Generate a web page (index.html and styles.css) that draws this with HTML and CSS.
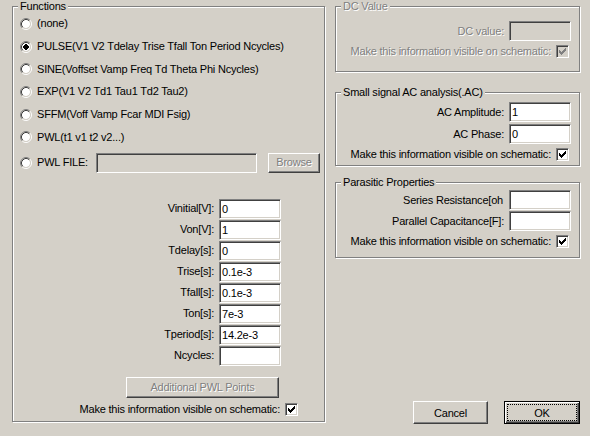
FILE: index.html
```html
<!DOCTYPE html>
<html>
<head>
<meta charset="utf-8">
<title>Independent Voltage Source</title>
<link rel="stylesheet" href="styles.css">
</head>
<body>
<div class="dialog">
  <div class="group functions">
    <span class="group-title">Functions</span>
    <div class="radios">
      <div class="radio-row">
        <svg class="radio" width="12" height="12" viewBox="0 0 12 12"><path d="M2.11 9.89A5.5 5.5 0 0 1 9.89 2.11" fill="none" stroke="#808080"/><path d="M9.89 2.11A5.5 5.5 0 0 1 2.11 9.89" fill="none" stroke="#fff"/><circle cx="6" cy="6" r="4" fill="#fff"/><path d="M2.82 9.18A4.5 4.5 0 0 1 9.18 2.82" fill="none" stroke="#404040"/><path d="M9.18 2.82A4.5 4.5 0 0 1 2.82 9.18" fill="none" stroke="#d4d0c8"/></svg>
        <span>(none)</span>
      </div>
      <div class="radio-row">
        <svg class="radio" width="12" height="12" viewBox="0 0 12 12"><path d="M2.11 9.89A5.5 5.5 0 0 1 9.89 2.11" fill="none" stroke="#808080"/><path d="M9.89 2.11A5.5 5.5 0 0 1 2.11 9.89" fill="none" stroke="#fff"/><circle cx="6" cy="6" r="4" fill="#fff"/><path d="M2.82 9.18A4.5 4.5 0 0 1 9.18 2.82" fill="none" stroke="#404040"/><path d="M9.18 2.82A4.5 4.5 0 0 1 2.82 9.18" fill="none" stroke="#d4d0c8"/><rect x="4" y="4" width="4" height="4" fill="#000"/><rect x="5" y="3" width="2" height="6" fill="#000"/><rect x="3" y="5" width="6" height="2" fill="#000"/></svg>
        <span>PULSE(V1 V2 Tdelay Trise Tfall Ton Period Ncycles)</span>
      </div>
      <div class="radio-row">
        <svg class="radio" width="12" height="12" viewBox="0 0 12 12"><path d="M2.11 9.89A5.5 5.5 0 0 1 9.89 2.11" fill="none" stroke="#808080"/><path d="M9.89 2.11A5.5 5.5 0 0 1 2.11 9.89" fill="none" stroke="#fff"/><circle cx="6" cy="6" r="4" fill="#fff"/><path d="M2.82 9.18A4.5 4.5 0 0 1 9.18 2.82" fill="none" stroke="#404040"/><path d="M9.18 2.82A4.5 4.5 0 0 1 2.82 9.18" fill="none" stroke="#d4d0c8"/></svg>
        <span>SINE(Voffset Vamp Freq Td Theta Phi Ncycles)</span>
      </div>
      <div class="radio-row">
        <svg class="radio" width="12" height="12" viewBox="0 0 12 12"><path d="M2.11 9.89A5.5 5.5 0 0 1 9.89 2.11" fill="none" stroke="#808080"/><path d="M9.89 2.11A5.5 5.5 0 0 1 2.11 9.89" fill="none" stroke="#fff"/><circle cx="6" cy="6" r="4" fill="#fff"/><path d="M2.82 9.18A4.5 4.5 0 0 1 9.18 2.82" fill="none" stroke="#404040"/><path d="M9.18 2.82A4.5 4.5 0 0 1 2.82 9.18" fill="none" stroke="#d4d0c8"/></svg>
        <span>EXP(V1 V2 Td1 Tau1 Td2 Tau2)</span>
      </div>
      <div class="radio-row">
        <svg class="radio" width="12" height="12" viewBox="0 0 12 12"><path d="M2.11 9.89A5.5 5.5 0 0 1 9.89 2.11" fill="none" stroke="#808080"/><path d="M9.89 2.11A5.5 5.5 0 0 1 2.11 9.89" fill="none" stroke="#fff"/><circle cx="6" cy="6" r="4" fill="#fff"/><path d="M2.82 9.18A4.5 4.5 0 0 1 9.18 2.82" fill="none" stroke="#404040"/><path d="M9.18 2.82A4.5 4.5 0 0 1 2.82 9.18" fill="none" stroke="#d4d0c8"/></svg>
        <span>SFFM(Voff Vamp Fcar MDI Fsig)</span>
      </div>
      <div class="radio-row">
        <svg class="radio" width="12" height="12" viewBox="0 0 12 12"><path d="M2.11 9.89A5.5 5.5 0 0 1 9.89 2.11" fill="none" stroke="#808080"/><path d="M9.89 2.11A5.5 5.5 0 0 1 2.11 9.89" fill="none" stroke="#fff"/><circle cx="6" cy="6" r="4" fill="#fff"/><path d="M2.82 9.18A4.5 4.5 0 0 1 9.18 2.82" fill="none" stroke="#404040"/><path d="M9.18 2.82A4.5 4.5 0 0 1 2.82 9.18" fill="none" stroke="#d4d0c8"/></svg>
        <span>PWL(t1 v1 t2 v2...)</span>
      </div>
    </div>
    <div class="pwl-file">
      <svg class="radio" width="12" height="12" viewBox="0 0 12 12"><path d="M2.11 9.89A5.5 5.5 0 0 1 9.89 2.11" fill="none" stroke="#808080"/><path d="M9.89 2.11A5.5 5.5 0 0 1 2.11 9.89" fill="none" stroke="#fff"/><circle cx="6" cy="6" r="4" fill="#fff"/><path d="M2.82 9.18A4.5 4.5 0 0 1 9.18 2.82" fill="none" stroke="#404040"/><path d="M9.18 2.82A4.5 4.5 0 0 1 2.82 9.18" fill="none" stroke="#d4d0c8"/></svg>
      <span class="pwl-label">PWL FILE:</span>
      <span class="edit off pwl-edit"></span>
      <button class="btn disabled browse">Browse</button>
    </div>
    <div class="fields">
      <div class="field"><span>Vinitial[V]:</span><span class="edit">0</span></div>
      <div class="field"><span>Von[V]:</span><span class="edit">1</span></div>
      <div class="field"><span>Tdelay[s]:</span><span class="edit">0</span></div>
      <div class="field"><span>Trise[s]:</span><span class="edit">0.1e-3</span></div>
      <div class="field"><span>Tfall[s]:</span><span class="edit">0.1e-3</span></div>
      <div class="field"><span>Ton[s]:</span><span class="edit">7e-3</span></div>
      <div class="field"><span>Tperiod[s]:</span><span class="edit">14.2e-3</span></div>
      <div class="field"><span>Ncycles:</span><span class="edit"></span></div>
    </div>
    <button class="btn disabled pwl-btn">Additional PWL Points</button>
    <div class="check-row left-check">
      <span>Make this information visible on schematic:</span>
      <span class="check"><svg width="11" height="11" viewBox="0 0 11 11"><path d="M2 4h1v1h1v1h1v-1h1v-1h1v-1h1v-1h1v3h-1v1h-1v1h-1v1h-1v1h-1v-1h-1v-1h-1z" fill="#000"/></svg></span>
    </div>
  </div>

  <div class="right">
    <div class="group dc disabled">
      <span class="group-title">DC Value</span>
      <div class="row dc-row"><span>DC value:</span><span class="edit off"></span></div>
      <div class="check-row r-check dc-check">
        <span>Make this information visible on schematic:</span>
        <span class="check off"><svg width="11" height="11" viewBox="0 0 11 11"><path d="M2 4h1v1h1v1h1v-1h1v-1h1v-1h1v-1h1v3h-1v1h-1v1h-1v1h-1v1h-1v-1h-1v-1h-1z" fill="#808080"/></svg></span>
      </div>
    </div>

    <div class="group ac">
      <span class="group-title">Small signal AC analysis(.AC)</span>
      <div class="row ac-amp"><span>AC Amplitude:</span><span class="edit">1</span></div>
      <div class="row ac-phase"><span>AC Phase:</span><span class="edit">0</span></div>
      <div class="check-row r-check ac-check">
        <span>Make this information visible on schematic:</span>
        <span class="check"><svg width="11" height="11" viewBox="0 0 11 11"><path d="M2 4h1v1h1v1h1v-1h1v-1h1v-1h1v-1h1v3h-1v1h-1v1h-1v1h-1v1h-1v-1h-1v-1h-1z" fill="#000"/></svg></span>
      </div>
    </div>

    <div class="group para">
      <span class="group-title">Parasitic Properties</span>
      <div class="row ser"><span class="ser-label">Series Resistance[oh</span><span class="edit"></span></div>
      <div class="row par"><span>Parallel Capacitance[F]:</span><span class="edit"></span></div>
      <div class="check-row r-check para-check">
        <span>Make this information visible on schematic:</span>
        <span class="check"><svg width="11" height="11" viewBox="0 0 11 11"><path d="M2 4h1v1h1v1h1v-1h1v-1h1v-1h1v-1h1v3h-1v1h-1v1h-1v1h-1v1h-1v-1h-1v-1h-1z" fill="#000"/></svg></span>
      </div>
    </div>

    <div class="buttons">
      <button class="btn cancel">Cancel</button>
      <button class="btn default ok">OK</button>
    </div>
  </div>
</div>
</body>
</html>
```

FILE: styles.css
```css
* { box-sizing: border-box; }

html, body { margin: 0; }

body {
  width: 590px;
  height: 436px;
  overflow: hidden;
  background: #d4d0c8;
  color: #000;
  font-family: "Liberation Sans", Arial, sans-serif;
  font-size: 11px;
  line-height: 13px;
  letter-spacing: -0.2px;
}

.dialog {
  display: grid;
  grid-template-columns: 313px 245px;
  column-gap: 10px;
  align-items: start;
  padding: 6px 0 0 12px;
}

/* etched group box */
.group {
  position: relative;
  border: 1px solid #808080;
  box-shadow: inset 1px 1px 0 #fff, 1px 1px 0 #fff;
}

.group-title {
  position: absolute;
  top: -7px;
  left: 5px;
  padding: 0 2px;
  background: #d4d0c8;
  white-space: nowrap;
}

.disabled, .disabled .group-title { color: #808080; text-shadow: 1px 1px 0 #fff; }

/* sunken edit box */
.edit {
  display: block;
  flex: none;
  width: 62px;
  height: 20px;
  padding: 0 2px;
  border: 1px solid;
  border-color: #808080 #fff #fff #808080;
  box-shadow: inset 1px 1px 0 #404040, inset -1px -1px 0 #d4d0c8;
  background: #fff;
  line-height: 18px;
  white-space: nowrap;
  overflow: hidden;
  text-shadow: none;
}

.edit.off { background: #d4d0c8; }

/* raised button */
.btn {
  font: inherit;
  letter-spacing: inherit;
  color: #000;
  background: #d4d0c8;
  border: 1px solid;
  border-color: #fff #404040 #404040 #fff;
  box-shadow: inset -1px -1px 0 #808080;
  padding: 0;
  margin: 0;
  line-height: 13px;
  text-align: center;
  white-space: nowrap;
}

.btn.disabled { color: #808080; text-shadow: 1px 1px 0 #fff; }

.btn.default {
  border: 1px solid #000;
  box-shadow: inset 1px 1px 0 #fff, inset -1px -1px 0 #404040, inset -2px -2px 0 #808080;
  outline: 1px dotted #000;
  outline-offset: -4px;
}

/* checkbox */
.check {
  flex: none;
  display: block;
  width: 13px;
  height: 13px;
  border: 1px solid;
  border-color: #808080 #fff #fff #808080;
  box-shadow: inset 1px 1px 0 #404040, inset -1px -1px 0 #d4d0c8;
  background: #fff;
}

.check svg { display: block; }
.check.off { background: #d4d0c8; }

/* Functions */
.functions {
  height: 416px;
  display: flex;
  flex-direction: column;
  padding-top: 5.67px;
}

.radio-row {
  height: 22.67px;
  display: flex;
  align-items: center;
  padding-left: 7px;
  white-space: nowrap;
}

.radio { flex: none; display: block; margin-right: 5px; }

.pwl-file {
  margin-top: 4.33px;
  height: 20px;
  display: flex;
  align-items: center;
  padding-left: 7px;
}

.pwl-label { width: 59px; flex: none; white-space: nowrap; }
.pwl-file .pwl-edit { width: 161px; }
.pwl-file .browse { width: 52px; height: 20px; margin-left: 11px; }

.fields {
  margin-top: 26px;
  display: flex;
  flex-direction: column;
  gap: 1px;
  padding-right: 43px;
}

.field, .row {
  height: 20px;
  display: flex;
  justify-content: flex-end;
  align-items: center;
  gap: 5px;
  white-space: nowrap;
}

.functions .pwl-btn {
  align-self: flex-start;
  margin-top: 11px;
  margin-left: 113px;
  width: 153px;
  height: 21px;
}

/* checkbox rows */
.check-row {
  height: 13px;
  display: flex;
  justify-content: flex-end;
  align-items: center;
  gap: 5px;
  white-space: nowrap;
}

.left-check { margin-top: 5px; padding-right: 26px; }

/* right column */
.right { display: flex; flex-direction: column; }

.row { padding-right: 8px; }
.r-check { padding-right: 10px; }

.dc { height: 66px; }
.dc-row { margin-top: 14px; }
.dc-check { margin-top: 4px; }

.ac { height: 74px; margin-top: 20px; }
.ac-amp { margin-top: 9px; }
.ac-phase { margin-top: 2px; }
.ac-check { margin-top: 4px; }

.para { height: 76px; margin-top: 16px; }
.ser { margin-top: 7px; }
.par { margin-top: 1px; }
.para-check { margin-top: 4px; }

.ser-label { margin-right: 1px; }

.buttons {
  margin-top: 143px;
  display: flex;
  justify-content: flex-end;
  gap: 16px;
}

.cancel { width: 75px; height: 23px; padding-top: 1px; }
.ok { width: 76px; height: 23px; padding-top: 1px; }
```
